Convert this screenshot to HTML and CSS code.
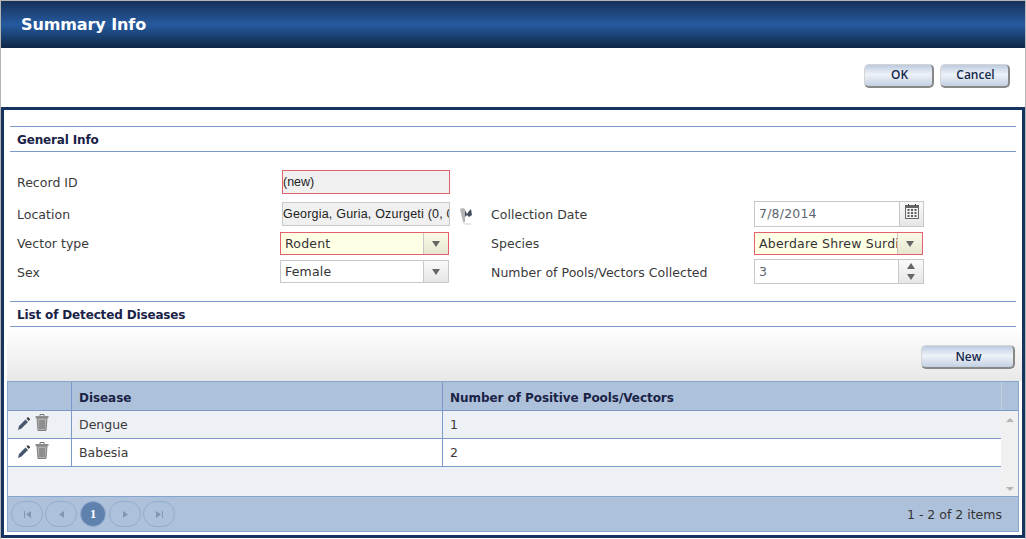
FILE: index.html
```html
<!DOCTYPE html>
<html lang="en">
<head>
  <meta charset="UTF-8" />
  <title>Summary Info</title>
  <link rel="stylesheet" href="styles.css">
</head>
<body>
  <div class="window">
    <div class="title-bar"><h1>Summary Info</h1></div>

    <div class="actions">
      <button class="btn">OK</button>
      <button class="btn">Cancel</button>
    </div>

    <div class="panel">
      <h2 class="section first">General Info</h2>

      <div class="form">
        <!-- Record ID -->
        <label class="lbl">Record ID</label>
        <div class="box readonly invalid record">(new)</div>

        <!-- Location / date -->
        <label class="lbl low">Location</label>
        <div class="location-cell">
          <div class="box readonly location"><span class="clip">Georgia, Guria, Ozurgeti (0, 0, 0)</span></div>
          <svg class="map-icon" width="14" height="17" viewBox="0 0 14 17">
            <path d="M1 1 L4 0 L6 1 L6 14 L4 14 Z" fill="#b4b4b4"/>
            <path d="M6 2 L8 6 L10 3 L12 1 L13 7 L10 9 L8 7 L6 9 Z" fill="#47505e"/>
            <path d="M4 14 L6 16 L12 16" fill="none" stroke="#e0e0e0" stroke-width="1.500"/>
          </svg>
        </div>
        <label class="lbl low">Collection Date</label>
        <div class="combo date">
          <span class="val muted">7/8/2014</span>
          <span class="side cal">
            <svg width="14" height="15" viewBox="0 0 14 15">
              <rect x=".5" y="1.500" width="13" height="13" fill="#f4f4f4" stroke="#666"/>
              <rect x="1" y="2" width="12" height="2" fill="#666"/>
              <path d="M3.500 0v2M10.500 0v2" stroke="#444"/>
              <path d="M2.500 5h2v2h-2zM6 5h2v2H6zM9.500 5h2v2h-2zM2.500 8h2v2h-2zM6 8h2v2H6zM9.500 8h2v2h-2zM2.500 11h2v2h-2zM6 11h2v2H6zM9.500 11h2v2h-2z" fill="#5c5c5c"/>
            </svg>
          </span>
        </div>

        <!-- Vector type / species -->
        <label class="lbl high">Vector type</label>
        <div class="combo required invalid">
          <span class="val">Rodent</span>
          <span class="side"><i class="arrow-down"></i></span>
        </div>
        <label class="lbl high">Species</label>
        <div class="combo required invalid species">
          <span class="val clip">Aberdare Shrew Surdisorex norae</span>
          <span class="side"><i class="arrow-down"></i></span>
        </div>

        <!-- Sex / number -->
        <label class="lbl low">Sex</label>
        <div class="combo sex">
          <span class="val">Female</span>
          <span class="side"><i class="arrow-down"></i></span>
        </div>
        <label class="lbl low">Number of Pools/Vectors Collected</label>
        <div class="combo number">
          <span class="val muted">3</span>
          <span class="side spin"><i class="arrow-up"></i><i class="arrow-down"></i></span>
        </div>
      </div>

      <h2 class="section">List of Detected Diseases</h2>

      <div class="grid-toolbar">
        <button class="btn new">New</button>
      </div>

      <div class="grid">
        <div class="grid-row grid-head">
          <div class="cell"></div>
          <div class="cell">Disease</div>
          <div class="cell wide">Number of Positive Pools/Vectors</div>
          <div class="cell scroll-head"></div>
        </div>

        <div class="grid-body">
          <div class="rows">
            <div class="grid-row alt">
              <div class="cell icons">
                <svg class="pencil" width="12" height="13" viewBox="0 0 12 13"><path d="M0 13 L1 9 L7.500 2.500 L10 5 L3.500 11.500 Z" fill="#46566e"/><path d="M8.500 1.500 L10 0 L12 2 L12 2.500 L10.700 4 Z" fill="#3a3a3a"/></svg>
                <svg class="trash" width="14" height="17" viewBox="0 0 14 17"><path d="M5 2V.5h4V2" fill="none" stroke="#777"/><rect x=".5" y="2" width="13" height="2" fill="#8f8f8f"/><path d="M2 4h10l-1 12.500H3z" fill="#b0b0b0" stroke="#808080"/><path d="M5 6v9M7 6v9M9 6v9" stroke="#6c6c6c"/></svg>
              </div>
              <div class="cell">Dengue</div>
              <div class="cell wide">1</div>
            </div>
            <div class="grid-row">
              <div class="cell icons">
                <svg class="pencil" width="12" height="13" viewBox="0 0 12 13"><path d="M0 13 L1 9 L7.500 2.500 L10 5 L3.500 11.500 Z" fill="#46566e"/><path d="M8.500 1.500 L10 0 L12 2 L12 2.500 L10.700 4 Z" fill="#3a3a3a"/></svg>
                <svg class="trash" width="14" height="17" viewBox="0 0 14 17"><path d="M5 2V.5h4V2" fill="none" stroke="#777"/><rect x=".5" y="2" width="13" height="2" fill="#8f8f8f"/><path d="M2 4h10l-1 12.500H3z" fill="#b0b0b0" stroke="#808080"/><path d="M5 6v9M7 6v9M9 6v9" stroke="#6c6c6c"/></svg>
              </div>
              <div class="cell">Babesia</div>
              <div class="cell wide">2</div>
            </div>
          </div>
          <div class="scrollbar">
            <i class="scroll-up"></i>
            <i class="scroll-down"></i>
          </div>
        </div>

        <div class="pager">
          <div class="pager-btns">
            <span class="pg"><svg width="9" height="9" viewBox="0 0 9 9"><path d="M1 1h1v7H1zM8 1v7L3 4.500z" fill="#8296b2"/></svg></span>
            <span class="pg"><svg width="9" height="9" viewBox="0 0 9 9"><path d="M7 1v7L2 4.500z" fill="#8296b2"/></svg></span>
            <span class="pg current">1</span>
            <span class="pg"><svg width="9" height="9" viewBox="0 0 9 9"><path d="M2 1v7l5-3.500z" fill="#8296b2"/></svg></span>
            <span class="pg"><svg width="9" height="9" viewBox="0 0 9 9"><path d="M1 1v7l5-3.500zM7 1h1v7H7z" fill="#8296b2"/></svg></span>
          </div>
          <span class="pager-info">1 - 2 of 2 items</span>
        </div>
      </div>
    </div>
  </div>
</body>
</html>
```

FILE: styles.css
```css
/* Summary info dialog */
html, body {
  margin: 0;
  padding: 0;
  height: 100%;
  overflow: hidden;
}
body {
  font-family: "DejaVu Sans", Verdana, sans-serif;
  font-size: 12.5px;
  color: #3a3a3a;
  background: #fff;
}
.window {
  box-sizing: border-box;
  height: 539px;
  border-top: 1px solid #b5b5b5;
  border-left: 1px solid #b5b5b5;
  border-right: 1px solid #b5b5b5;
  display: flex;
  flex-direction: column;
}
.title-bar {
  height: 47px;
  flex: none;
  display: flex;
  align-items: center;
  padding-left: 20px;
  background: linear-gradient(#16315a 0%, #265a9e 50%, #0f2747 100%);
}
h1 {
  margin: 0 0 1px;
  font-size: 16px;
  font-weight: bold;
  letter-spacing: -.1px;
  color: #fff;
}

/* buttons */
.btn {
  width: 70px;
  height: 24px;
  padding: 0 0 2px 2px;
  font-family: "Open Sans", Arial, sans-serif;
  font-size: 12px;
  font-weight: 600;
  color: #14284b;
  border: 1px solid #d4d4d4;
  border-right: 2px solid #888;
  border-bottom: 2px solid #888;
  border-radius: 5px;
  background: linear-gradient(#bccbe0 0%, #eef2f8 45%, #c3d0e3 100%);
}
.actions {
  height: 59px;
  flex: none;
  box-sizing: border-box;
  display: flex;
  justify-content: flex-end;
  gap: 6px;
  padding: 16px 15px 0 0;
}

/* main panel */
.panel {
  box-sizing: border-box;
  height: 431px;
  flex: none;
  border: 3px solid #17335f;
  padding-top: 16px;
}
.section {
  box-sizing: content-box;
  margin: 0 6px;
  height: 24px;
  line-height: 26px;
  padding-left: 7px;
  font-size: 12px;
  font-weight: bold;
  letter-spacing: -.15px;
  color: #1a2347;
  border-top: 1px solid #7b9ac9;
  border-bottom: 1px solid #7b9ac9;
}

/* form: label, field, label, field */
.form {
  display: grid;
  grid-template-columns: 263px 211px 263px 170px;
  grid-template-rows: 31px 31px 27px 25px;
  align-items: start;
  margin: 18px 0 17px 13px;
}
.lbl {
  color: #3a3a3a;
  height: 25px;
  line-height: 26px;
  letter-spacing: .03px;
}
.lbl.low {
  line-height: 28px;
}
.lbl.high {
  line-height: 24px;
}
.box {
  box-sizing: border-box;
  width: 168px;
  height: 24px;
  margin-left: 2px;
  line-height: 22px;
  font-family: "Liberation Sans", Arial, sans-serif;
  font-size: 12.5px;
  color: #222;
  border: 1px solid #c8c8c8;
}
.readonly {
  background: #f0f0f0;
}
.record {
  grid-column: 2 / 5;
}
.invalid {
  border: 1px solid #e4606d !important;
}
.location-cell {
  display: flex;
  align-items: flex-start;
  gap: 9px;
  padding-top: 1px;
}
.location {
  flex: none;
  letter-spacing: .2px;
}
.clip {
  display: block;
  overflow: hidden;
  white-space: nowrap;
}
.map-icon {
  flex: none;
  margin-top: 6px;
}
.combo {
  box-sizing: border-box;
  width: 169px;
  height: 23px;
  display: flex;
  background: #fff;
  border: 1px solid #c8c8c8;
}
.combo.sex {
  margin-top: 1px;
}
.combo.date, .combo.number {
  width: 170px;
}
.combo.date {
  height: 26px;
}
.combo.number {
  height: 25px;
}
.combo.required {
  background: #ffffe6;
}
.val {
  flex: 1;
  min-width: 0;
  line-height: 21px;
  padding-left: 4px;
  letter-spacing: .2px;
  color: #333;
}
.val.muted {
  color: #5c6670;
  line-height: 24px;
}
.side {
  flex: none;
  width: 24px;
  display: flex;
  align-items: center;
  justify-content: center;
  border-left: 1px solid #c8c8c8;
  background: linear-gradient(#fafafa, #e6e6e6);
}
.side.cal {
  align-items: flex-start;
  padding-top: 2px;
  box-sizing: border-box;
}
.required .side {
  background: linear-gradient(#fbfbe8, #e6e6d0);
}
.spin {
  flex-direction: column;
  gap: 5px;
}
.arrow-down, .arrow-up {
  display: block;
  width: 0;
  height: 0;
  border-left: 4px solid transparent;
  border-right: 4px solid transparent;
}
.arrow-down {
  border-top: 6px solid #666;
}
.arrow-up {
  border-bottom: 6px solid #666;
}

/* disease grid */
.grid-toolbar {
  box-sizing: border-box;
  height: 54px;
  display: flex;
  justify-content: flex-end;
  align-items: flex-start;
  padding: 18px 7px 0 0;
  margin-left: 3px;
  background: linear-gradient(#fff, #e8e8e8);
}
.btn.new {
  width: 94px;
  padding-bottom: 0;
}
.grid {
  box-sizing: border-box;
  height: 151px;
  margin: 0 3px;
  border: 1px solid #86a4cc;
  display: flex;
  flex-direction: column;
}
.grid-row {
  display: flex;
  height: 28px;
  box-sizing: border-box;
  border-bottom: 1px solid #7b9ac9;
  background: #fff;
}
.grid-row.alt {
  background: #edf0f5;
}
.grid-head {
  flex: none;
  height: 29px;
  background: #aec1da;
  font-size: 12px;
  font-weight: bold;
  letter-spacing: -.06px;
  color: #1a2347;
}
.grid-head .cell {
  line-height: 32px;
}
.cell {
  box-sizing: border-box;
  width: 371px;
  line-height: 28px;
  padding-left: 7px;
}
.cell:first-child {
  width: 64px;
  border-right: 1px solid #7b9ac9;
}
.cell:nth-child(2) {
  border-right: 1px solid #7b9ac9;
}
.cell.wide {
  flex: 1;
  border-right: none;
}
.scroll-head {
  flex: none;
  width: 17px;
  border-left: 1px solid #c3d0e0;
}
.icons {
  display: flex;
  align-items: flex-start;
  gap: 5px;
  padding: 3px 0 0 10px;
}
.pencil {
  margin-top: 3px;
}
.grid-body {
  flex: 1;
  display: flex;
  background: #edf0f5;
}
.rows {
  flex: 1;
}
.scrollbar {
  flex: none;
  width: 17px;
  background: #f0f0f0;
  display: flex;
  flex-direction: column;
  justify-content: space-between;
  align-items: center;
  padding: 7px 0 5px;
  box-sizing: border-box;
}
.scroll-up, .scroll-down {
  display: block;
  width: 0;
  height: 0;
  border-left: 4px solid transparent;
  border-right: 4px solid transparent;
}
.scroll-up {
  border-bottom: 4px solid #b5b5b5;
}
.scroll-down {
  border-top: 4px solid #b5b5b5;
}
.pager {
  flex: none;
  height: 35px;
  box-sizing: border-box;
  border-top: 1px solid #86a4cc;
  background: #aec1da;
  display: flex;
  align-items: center;
  justify-content: space-between;
  padding: 0 16px 0 3px;
}
.pager-btns {
  display: flex;
  gap: 2px;
}
.pg {
  box-sizing: border-box;
  width: 32px;
  height: 26px;
  display: flex;
  align-items: center;
  justify-content: center;
  border: 1px solid #93abcd;
  border-radius: 13px;
}
.pg.current {
  width: 26px;
  margin: 0 1px;
  background: #5f81ae;
  color: #fff;
  font-family: "Liberation Serif", serif;
  font-weight: bold;
}
.pager-info {
  color: #333;
}
```
